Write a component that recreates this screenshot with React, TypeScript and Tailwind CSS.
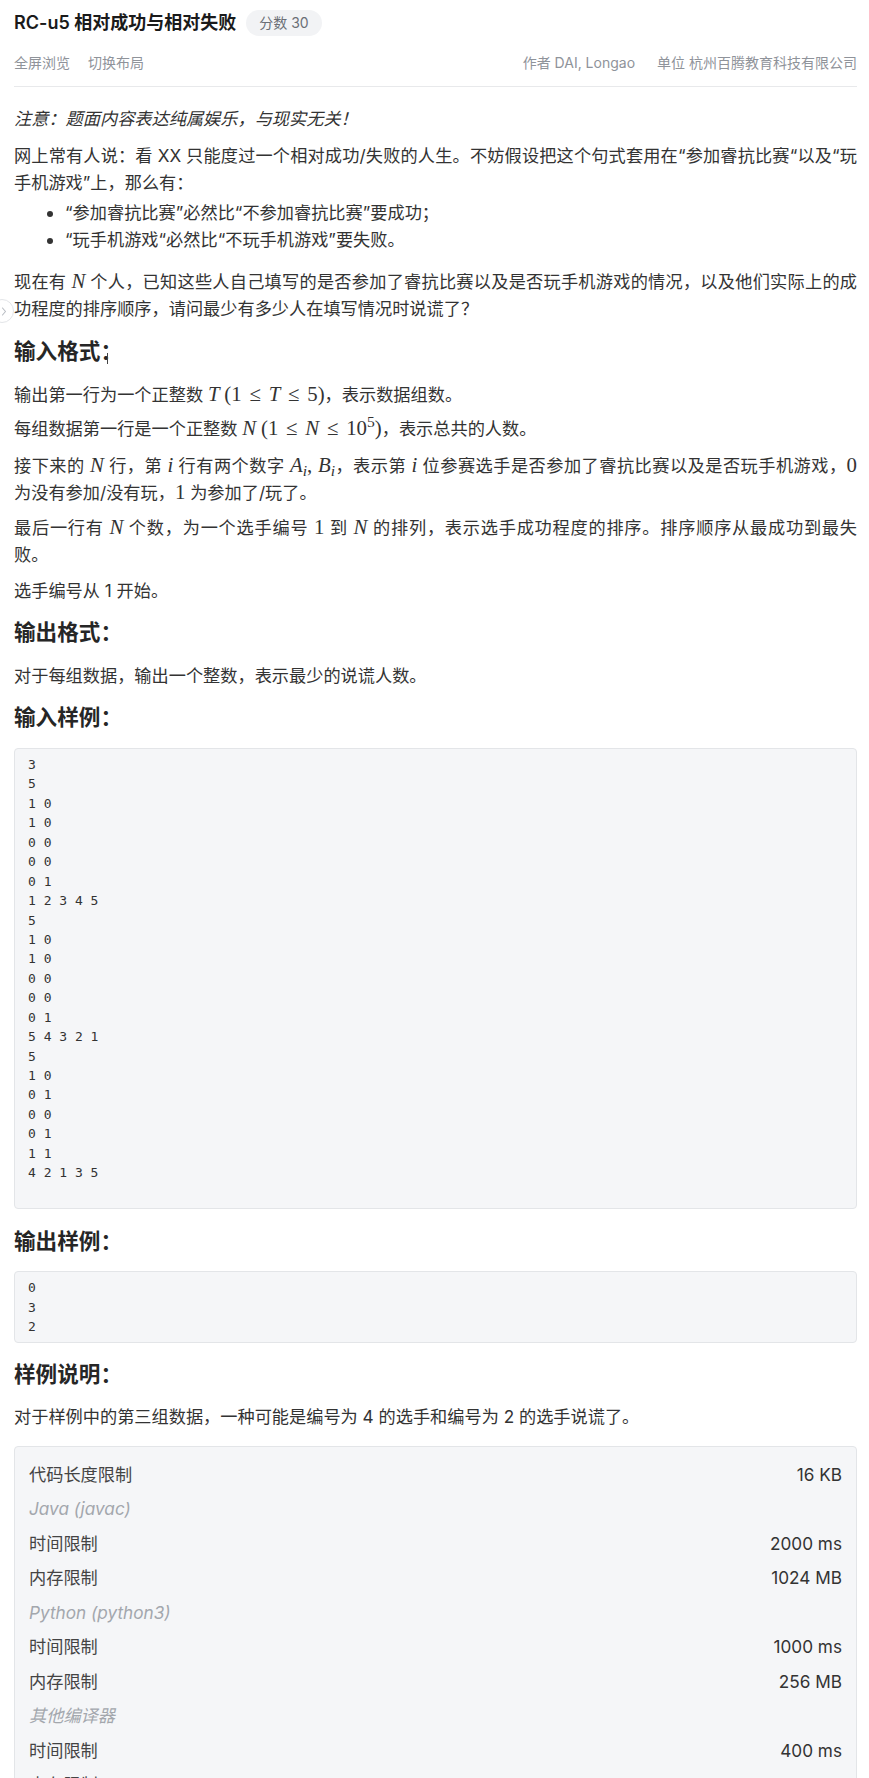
import React from "react";

const Mi = ({ children }: { children: React.ReactNode }) => (
  <span className="font-['Liberation_Serif',serif] italic text-[20.8px] leading-none">{children}</span>
);
const Mr = ({ children }: { children: React.ReactNode }) => (
  <span className="font-['Liberation_Serif',serif] text-[20.8px] leading-none">{children}</span>
);
const Rel = () => (
  <span className="inline-block w-[16px] text-center font-['Liberation_Serif','DejaVu_Serif',serif] text-[20.8px] leading-none mx-[5.5px]">≤</span>
);

const JL = ({ children }: { children: React.ReactNode }) => (
  <span className="block [text-align-last:justify]">{children}</span>
);
const L = ({ children }: { children: React.ReactNode }) => <span className="block">{children}</span>;

const sample1 = `3
5
1 0
1 0
0 0
0 0
0 1
1 2 3 4 5
5
1 0
1 0
0 0
0 0
0 1
5 4 3 2 1
5
1 0
0 1
0 0
0 1
1 1
4 2 1 3 5`;

const sample2 = `0
3
2`;

const limits: { label: string; value?: string; section?: boolean }[] = [
  { label: "代码长度限制", value: "16 KB" },
  { label: "Java (javac)", section: true },
  { label: "时间限制", value: "2000 ms" },
  { label: "内存限制", value: "1024 MB" },
  { label: "Python (python3)", section: true },
  { label: "时间限制", value: "1000 ms" },
  { label: "内存限制", value: "256 MB" },
  { label: "其他编译器", section: true },
  { label: "时间限制", value: "400 ms" },
  { label: "内存限制", value: "64 MB" },
];

const P = ({ className = "", children }: { className?: string; children: React.ReactNode }) => (
  <p className={`text-[17.2px] leading-[27px] text-[#333] text-justify ${className}`}>{children}</p>
);

const H = ({ className = "", children }: { className?: string; children: React.ReactNode }) => (
  <h3 className={`text-[21.6px] leading-[28px] font-semibold text-[#262626] ${className}`}>{children}</h3>
);

export default function App() {
  return (
    <div className="relative w-full min-h-screen bg-white font-['Inter','Noto_Sans_CJK_SC',sans-serif] pl-[14px] pr-[12px]">
      {/* collapse handle on left edge */}
      <div className="absolute left-[-10px] top-[299px] w-[24px] h-[24px] rounded-full border border-[#e3e5e8] bg-white">
        <svg className="absolute left-[10px] top-[7px]" width="6" height="9" viewBox="0 0 6 9" fill="none">
          <path d="M1.5 1 L4.5 4.5 L1.5 8" stroke="#b8bcc2" strokeWidth="1.1" strokeLinecap="round" strokeLinejoin="round" />
        </svg>
      </div>

      {/* header */}
      <div className="border-b border-[#e8e9eb] pt-[10px] pb-[13px]">
        <div className="flex items-center h-[26px]">
          <h1 className="text-[18px] font-semibold text-[#1a1a1a] leading-[26px]">RC-u5 相对成功与相对失败</h1>
          <span className="ml-[10px] h-[26px] rounded-full bg-[#f2f3f5] px-[13px] text-[14px] leading-[26px] text-[#6b6f76]">分数 30</span>
        </div>
        <div className="mt-[17px] flex items-center justify-between text-[14px] leading-[20px] text-[#8f939a]">
          <div className="flex gap-[18px]">
            <span>全屏浏览</span>
            <span>切换布局</span>
          </div>
          <div className="flex gap-[22px]">
            <span>作者 DAI, Longao</span>
            <span>单位 杭州百腾教育科技有限公司</span>
          </div>
        </div>
      </div>

      {/* body */}
      <div className="pb-[40px]">
        <P className="mt-[18px] italic">注意：题面内容表达纯属娱乐，与现实无关！</P>
        <P className="mt-[10px]">
          <JL>网上常有人说：看 XX 只能度过一个相对成功/失败的人生。不妨假设把这个句式套用在“参加睿抗比赛“以及“玩</JL>
          <L>手机游戏”上，那么有：</L>
        </P>
        <ul className="mt-[3px] pl-[51px] list-disc text-[17.2px] leading-[27px] text-[#333]">
          <li>“参加睿抗比赛”必然比“不参加睿抗比赛”要成功；</li>
          <li>“玩手机游戏“必然比“不玩手机游戏”要失败。</li>
        </ul>
        <P className="mt-[15px]">
          <JL>
            现在有 <Mi>N</Mi> 个人，已知这些人自己填写的是否参加了睿抗比赛以及是否玩手机游戏的情况，以及他们实际上的成
          </JL>
          <L>功程度的排序顺序，请问最少有多少人在填写情况时说谎了？</L>
        </P>

        <H className="mt-[15px]">
          输入格式：
          <span className="relative top-[5px] ml-[-15px] inline-block w-[1px] h-[11px] bg-[#444]"></span>
        </H>
        <P className="mt-[16px]">
          输出第一行为一个正整数 <Mi>T</Mi> <Mr>(1</Mr>
          <Rel />
          <Mi>T</Mi>
          <Rel />
          <Mr>5)</Mr>，表示数据组数。
        </P>
        <P className="mt-[7px]">
          每组数据第一行是一个正整数 <Mi>N</Mi> <Mr>(1</Mr>
          <Rel />
          <Mi>N</Mi>
          <Rel />
          <Mr>
            10<sup>5</sup>)
          </Mr>
          ，表示总共的人数。
        </P>
        <P className="mt-[10px]">
          <JL>
            接下来的 <Mi>N</Mi> 行，第 <Mi>i</Mi> 行有两个数字{" "}
            <Mi>
              A<sub>i</sub>
            </Mi>
            <Mr>, </Mr>
            <Mi>
              B<sub>i</sub>
            </Mi>
            ，表示第 <Mi>i</Mi> 位参赛选手是否参加了睿抗比赛以及是否玩手机游戏，<Mr>0</Mr>
          </JL>
          <L>
            为没有参加/没有玩，<Mr>1</Mr> 为参加了/玩了。
          </L>
        </P>
        <P className="mt-[8px]">
          <JL>
            最后一行有 <Mi>N</Mi> 个数，为一个选手编号 <Mr>1</Mr> 到 <Mi>N</Mi> 的排列，表示选手成功程度的排序。排序顺序从最成功到最失
          </JL>
          <L>败。</L>
        </P>
        <P className="mt-[9px]">选手编号从 1 开始。</P>

        <H className="mt-[14px]">输出格式：</H>
        <P className="mt-[16px]">对于每组数据，输出一个整数，表示最少的说谎人数。</P>

        <H className="mt-[14px]">输入样例：</H>
        <pre className="mt-[17px] rounded-[4px] border border-[#e3e5e8] bg-[#f5f6f8] px-[13px] pt-[6px] pb-[25.5px] font-['DejaVu_Sans_Mono',monospace] text-[13px] leading-[19.44px] text-[#333] whitespace-pre">
          {sample1}
        </pre>

        <H className="mt-[18px]">输出样例：</H>
        <pre className="mt-[16px] rounded-[4px] border border-[#e3e5e8] bg-[#f5f6f8] px-[13px] py-[6px] font-['DejaVu_Sans_Mono',monospace] text-[13px] leading-[19.44px] text-[#333] whitespace-pre">
          {sample2}
        </pre>

        <H className="mt-[17px]">样例说明：</H>
        <P className="mt-[15px]">对于样例中的第三组数据，一种可能是编号为 4 的选手和编号为 2 的选手说谎了。</P>

        <div className="mt-[16px] rounded-[4px] border border-[#e3e5e8] bg-[#f5f6f8] px-[14px] py-[10px]">
          {limits.map((row, idx) => (
            <div key={idx} className="flex h-[34.5px] items-center justify-between text-[17.2px]">
              {row.section ? (
                <span className="italic text-[#a3a7ad]">{row.label}</span>
              ) : (
                <>
                  <span className="text-[#444]">{row.label}</span>
                  <span className="text-[#333]">{row.value}</span>
                </>
              )}
            </div>
          ))}
        </div>
      </div>
    </div>
  );
}
